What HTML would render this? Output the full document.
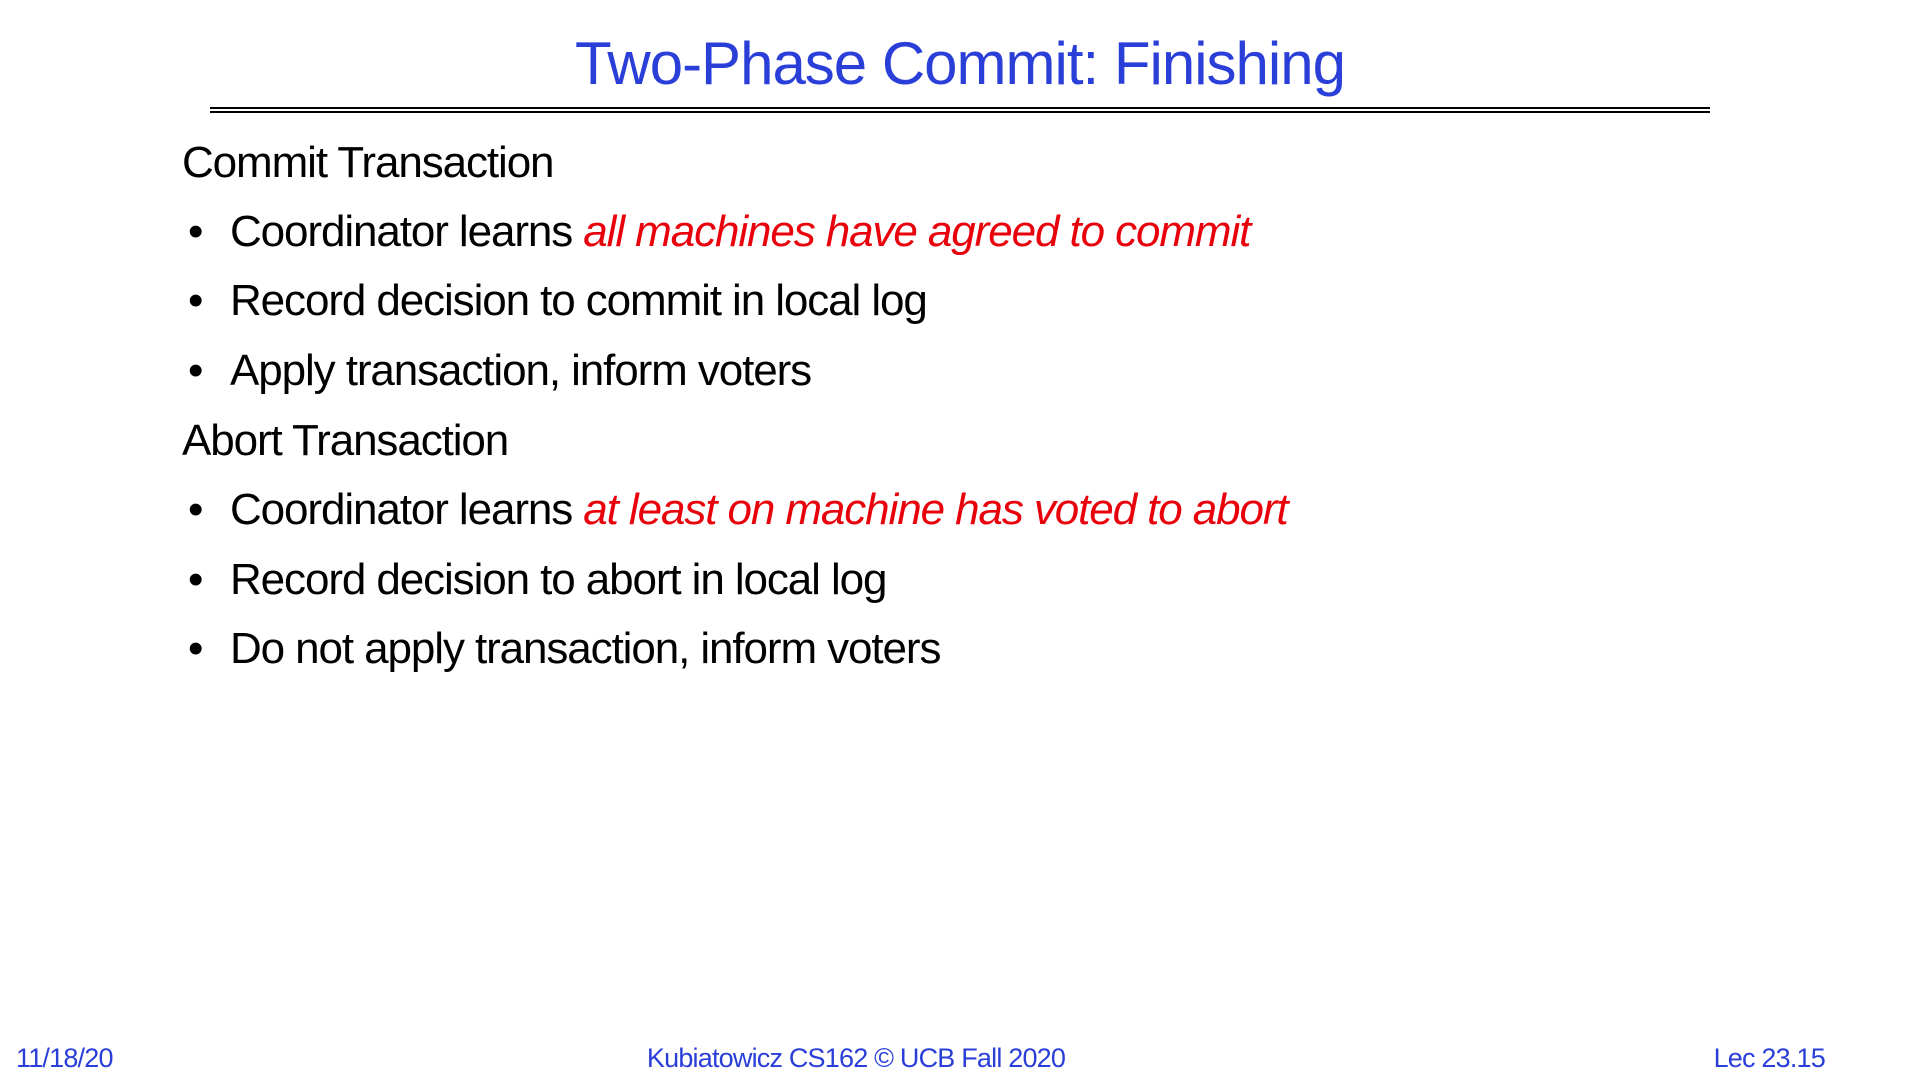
<!DOCTYPE html>
<html><head><style>
body{margin:0;width:1920px;height:1080px;background:#fff;position:relative;font-family:"Liberation Sans",sans-serif;overflow:hidden}
.t{position:absolute;left:0;width:1920px;text-align:center;top:28px;font-size:60px;color:#2a3ed8;letter-spacing:-1px;line-height:72px}
.hr{position:absolute;left:210px;width:1500px;height:2px;background:#000}
.l{position:absolute;font-size:44px;line-height:50px;color:#000;letter-spacing:-1.1px;white-space:nowrap}
.b{left:188px}
.b span.s{display:inline-block;width:42px}
.r{color:#e8000b;font-style:italic}
.f{position:absolute;top:1043px;font-size:27px;color:#2a3ed8;letter-spacing:-0.8px;line-height:30px}
</style></head><body>
<div class="t">Two-Phase Commit: Finishing</div>
<div class="hr" style="top:107px"></div>
<div class="hr" style="top:111px"></div>
<div class="l" style="left:182px;top:138px">Commit Transaction</div>
<div class="l b" style="top:207px"><span class="s">•</span>Coordinator learns <span class="r">all machines have agreed to commit</span></div>
<div class="l b" style="top:276px"><span class="s">•</span>Record decision to commit in local log</div>
<div class="l b" style="top:346px"><span class="s">•</span>Apply transaction, inform voters</div>
<div class="l" style="left:182px;top:416px">Abort Transaction</div>
<div class="l b" style="top:485px"><span class="s">•</span>Coordinator learns <span class="r">at least on machine has voted to abort</span></div>
<div class="l b" style="top:555px"><span class="s">•</span>Record decision to abort in local log</div>
<div class="l b" style="top:624px"><span class="s">•</span>Do not apply transaction, inform voters</div>
<div class="f" style="left:16px">11/18/20</div>
<div class="f" style="left:0;width:1712px;text-align:center">Kubiatowicz CS162 © UCB Fall 2020</div>
<div class="f" style="right:95px">Lec 23.15</div>
</body></html>
